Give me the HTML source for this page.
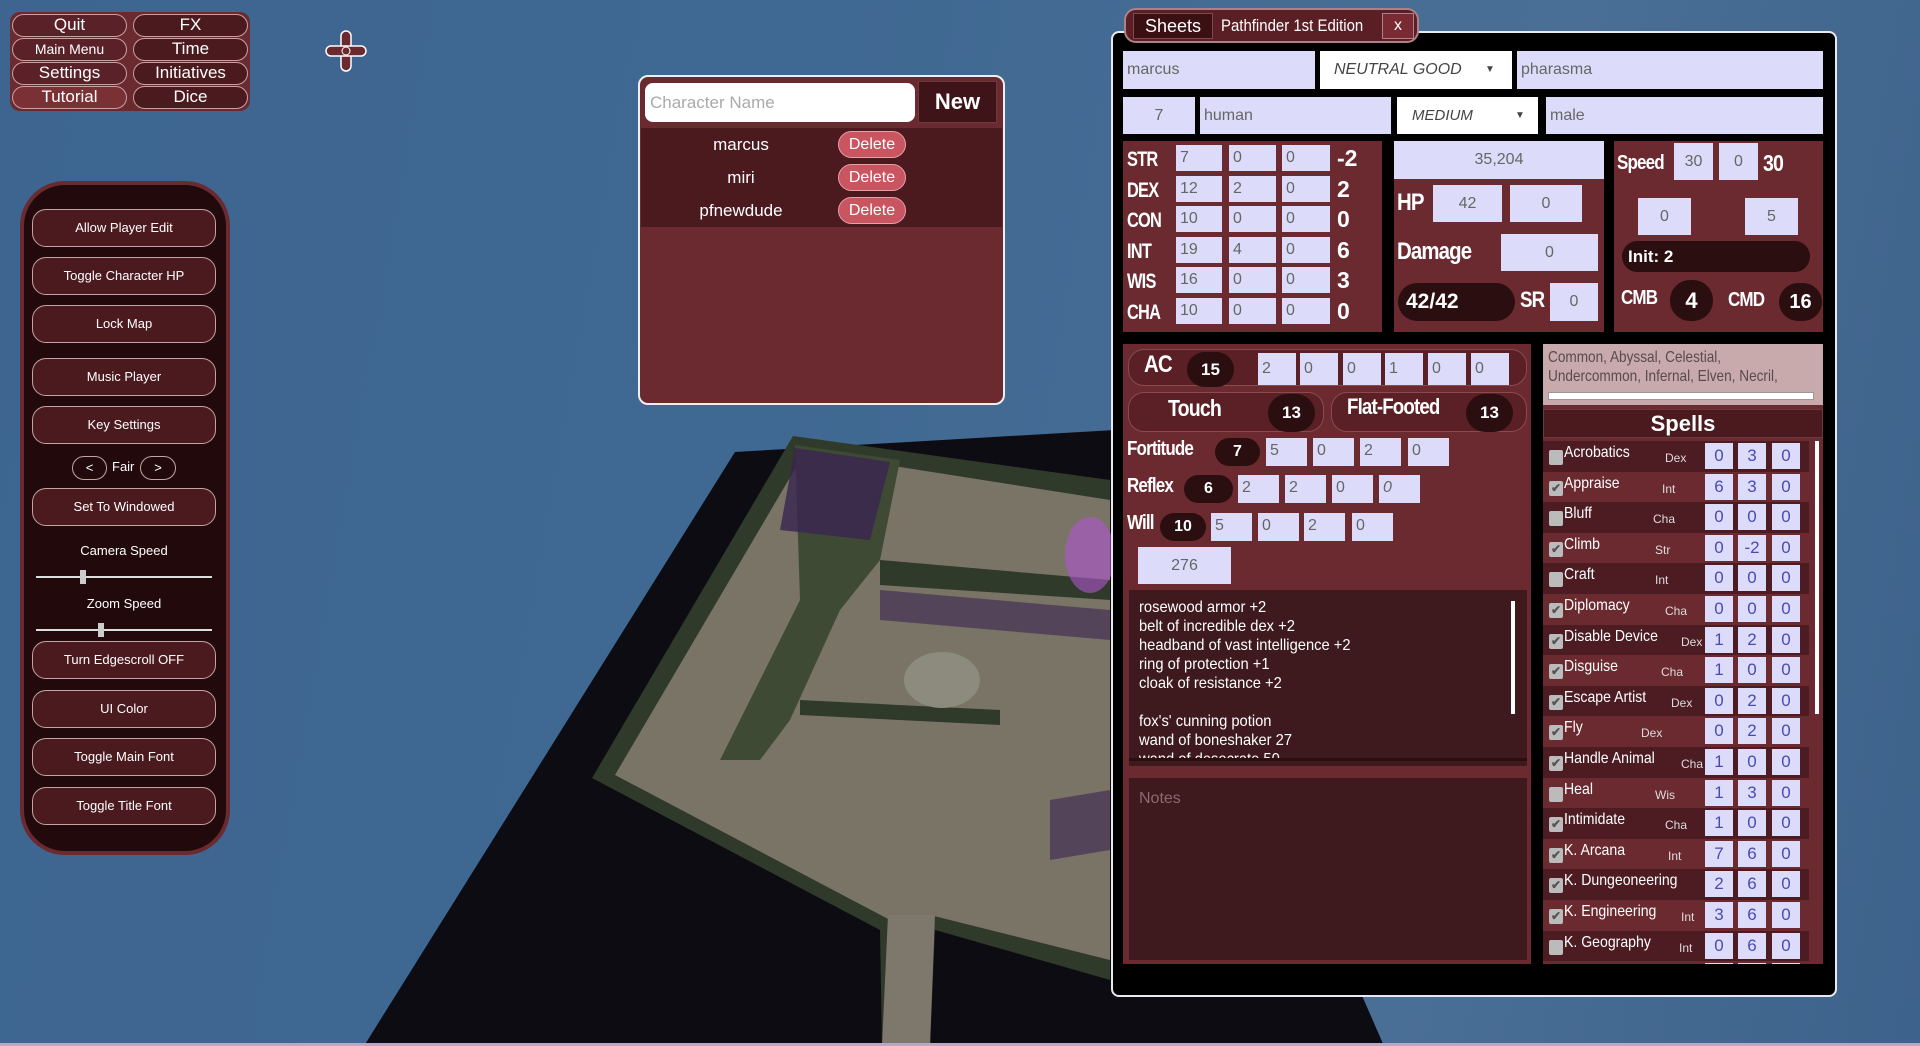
<!DOCTYPE html>
<html><head><meta charset="utf-8">
<style>
*{margin:0;padding:0;box-sizing:border-box}
body{width:1920px;height:1046px;overflow:hidden;position:relative;font-family:"Liberation Sans",sans-serif;background:linear-gradient(100deg,#3d6590 0%,#3f6892 40%,#4a6f96 75%,#3d628b 100%)}
.a{position:absolute}
.mb{position:absolute;height:23px;border:1.5px solid #c9a0a0;border-radius:12px;background:#5a2228;color:#fff;font:16px "Liberation Sans",sans-serif;text-align:center;line-height:20px}
.lb{position:absolute;left:32px;width:184px;height:38px;border:1.5px solid #c4a3a3;border-radius:14px;background:#4a1a1f;color:#fff;font:13px "Liberation Sans",sans-serif;text-align:center;line-height:35px}
.in{position:absolute;background:#dcdcfa;color:#666;font-size:16px;line-height:26px;padding-left:4px}
.lbl{position:absolute;color:#fff;font-weight:bold;font-size:21px;letter-spacing:-1px;transform:scaleX(.85);transform-origin:left}
.pill{position:absolute;background:#2a0e10;color:#fff;border-radius:20px;text-align:center;font-weight:bold}
.sk{height:30.6px;position:relative}
.sk:nth-child(odd){background:#4c1c22}
.sk:nth-child(even){background:#6a2a30}
.cb{position:absolute;left:6px;top:9px;width:14px;height:15px;background:#bbb;border-radius:2px;color:#555;font-size:12px;line-height:15px;text-align:center;font-weight:bold}
.sn{position:absolute;left:21px;top:3px;color:#fff;font-size:16px;transform:scaleX(.88);transform-origin:left;white-space:nowrap}
.sa{position:absolute;top:10px;color:#ddd;font-size:12px}
.sv{position:absolute;top:2px;width:28px;height:26px;background:#dcdcfa;color:#4a4ab0;font-size:17px;text-align:center;line-height:26px}
</style></head><body>

<!-- map -->
<svg class="a" style="left:0;top:0" width="1920" height="1046">
<polygon points="735,452 1115,430 1384,1046 364,1046" fill="#0c0c12"/>
<polygon points="793,436 1110,480 1110,980 935,930 930,1046 882,1046 880,930 592,778" fill="#2f3a2a"/>
<polygon points="805,452 1110,500 1110,960 930,915 890,920 615,775" fill="#7a7466"/>
<polygon points="795,445 900,460 880,560 840,610 790,720 760,760 720,760 800,600" fill="#3f4a34"/>
<polygon points="795,448 890,462 870,540 780,530" fill="#3a2450" opacity=".8"/>
<polygon points="880,560 1110,580 1110,600 880,585" fill="#2f3a2a"/>
<polygon points="800,700 1000,710 1000,725 800,715" fill="#2f3a2a"/>
<polygon points="880,590 1110,610 1110,640 880,620" fill="#3a2450" opacity=".6"/>
<polygon points="1050,800 1110,790 1110,850 1050,860" fill="#3a2450" opacity=".6"/>
<ellipse cx="942" cy="680" rx="38" ry="28" fill="#8d8a7e"/>
<ellipse cx="1090" cy="555" rx="25" ry="38" fill="#b055d0" opacity=".6"/>
<polygon points="888,915 935,915 930,1046 882,1046" fill="#7d786b"/>
</svg>

<!-- top menu -->
<div class="a" style="left:10px;top:12px;width:240px;height:99px;background:#6a2a30;border-radius:10px"></div>
<div class="mb" style="left:12px;top:14px;width:115px;font-size:17px">Quit</div>
<div class="mb" style="left:12px;top:38px;width:115px;font-size:14px">Main Menu</div>
<div class="mb" style="left:12px;top:62px;width:115px;font-size:17px">Settings</div>
<div class="mb" style="left:12px;top:86px;width:115px;background:#7a3035;font-size:17px">Tutorial</div>
<div class="mb" style="left:133px;top:14px;width:115px;background:#4a1a1f;font-size:17px">FX</div>
<div class="mb" style="left:133px;top:38px;width:115px;background:#4a1a1f;font-size:17px">Time</div>
<div class="mb" style="left:133px;top:62px;width:115px;background:#4a1a1f;font-size:17px">Initiatives</div>
<div class="mb" style="left:133px;top:86px;width:115px;background:#4a1a1f;font-size:17px">Dice</div>
<svg class="a" style="left:325px;top:30px" width="42" height="42"><g fill="#6a2a30" stroke="#fff" stroke-width="1.5"><rect x="16" y="1" width="10" height="40" rx="5"/><rect x="1" y="16" width="40" height="10" rx="5"/></g><circle cx="21" cy="21" r="4" fill="#6a2a30" stroke="#fff"/></svg>

<!-- left panel -->
<div class="a" style="left:20px;top:181px;width:210px;height:674px;background:#220a0c;border:4px solid #6a2a30;border-radius:45px"></div>
<div class="lb" style="top:209px">Allow Player Edit</div>
<div class="lb" style="top:257px">Toggle Character HP</div>
<div class="lb" style="top:305px">Lock Map</div>
<div class="lb" style="top:358px">Music Player</div>
<div class="lb" style="top:406px">Key Settings</div>
<div class="a" style="left:72px;top:456px;width:35px;height:24px;border:1.5px solid #c4a3a3;border-radius:12px;color:#fff;text-align:center;font:13px 'Liberation Sans';line-height:21px">&lt;</div>
<div class="a" style="left:112px;top:459px;color:#fff;font:13px 'Liberation Sans'">Fair</div>
<div class="a" style="left:140px;top:456px;width:36px;height:24px;border:1.5px solid #c4a3a3;border-radius:12px;color:#fff;text-align:center;font:13px 'Liberation Sans';line-height:21px">&gt;</div>
<div class="lb" style="top:488px">Set To Windowed</div>
<div class="a" style="left:32px;top:543px;width:184px;text-align:center;color:#fff;font:13px 'Liberation Sans'">Camera Speed</div>
<div class="a" style="left:36px;top:576px;width:176px;height:2px;background:#ddd"></div>
<div class="a" style="left:80px;top:570px;width:6px;height:14px;background:#ccc"></div>
<div class="a" style="left:32px;top:596px;width:184px;text-align:center;color:#fff;font:13px 'Liberation Sans'">Zoom Speed</div>
<div class="a" style="left:36px;top:629px;width:176px;height:2px;background:#ddd"></div>
<div class="a" style="left:98px;top:623px;width:6px;height:14px;background:#ccc"></div>
<div class="lb" style="top:641px">Turn Edgescroll OFF</div>
<div class="lb" style="top:690px">UI Color</div>
<div class="lb" style="top:738px">Toggle Main Font</div>
<div class="lb" style="top:787px">Toggle Title Font</div>

<!-- character panel -->
<div class="a" style="left:638px;top:75px;width:367px;height:330px;background:#6a2a30;border:2px solid #eee;border-radius:10px"></div>
<div class="a" style="left:645px;top:83px;width:270px;height:39px;background:#fff;border-radius:8px;color:#aaa;font:17px 'Liberation Sans';line-height:39px;padding-left:5px">Character Name</div>
<div class="a" style="left:918px;top:81px;width:79px;height:42px;background:#3e1418;border:1px solid #6a3a3e;color:#fff;font:bold 22px 'Liberation Sans';text-align:center;line-height:40px">New</div>
<div class="a" style="left:641px;top:128px;width:361px;height:99px;background:#4a1a1e"></div>
<div class="a" style="left:676px;top:128px;width:130px;text-align:center;color:#fff;font:17px 'Liberation Sans';line-height:33px">marcus<br>miri<br>pfnewdude</div>
<div class="a" style="left:838px;top:131px;width:68px;height:27px;background:#c95560;border:1px solid #e8a0a8;border-radius:14px;color:#fff;font:16px 'Liberation Sans';text-align:center;line-height:25px">Delete</div>
<div class="a" style="left:838px;top:164px;width:68px;height:27px;background:#c95560;border:1px solid #e8a0a8;border-radius:14px;color:#fff;font:16px 'Liberation Sans';text-align:center;line-height:25px">Delete</div>
<div class="a" style="left:838px;top:197px;width:68px;height:27px;background:#c95560;border:1px solid #e8a0a8;border-radius:14px;color:#fff;font:16px 'Liberation Sans';text-align:center;line-height:25px">Delete</div>

<!-- sheet -->
<div class="a" style="left:1111px;top:31px;width:726px;height:966px;background:#000;border:2px solid #e8e8ee;border-radius:8px"></div>
<div class="a" style="left:1124px;top:8px;width:295px;height:35px;background:#5a1f25;border:2px solid #b08088;border-radius:12px"></div>
<div class="a" style="left:1133px;top:13px;width:80px;height:26px;background:#3a1013;border:1px solid #7a4a4e;color:#fff;font-size:18px;text-align:center;line-height:24px">Sheets</div>
<div class="a" style="left:1221px;top:13px;color:#fff;font-size:17px;line-height:26px;transform:scaleX(.88);transform-origin:left;white-space:nowrap">Pathfinder 1st Edition</div>
<div class="a" style="left:1382px;top:13px;width:32px;height:26px;background:#7a2a32;border:1px solid #b08088;color:#fff;font-size:16px;text-align:center;line-height:24px">x</div>

<div class="in" style="left:1123px;top:51px;width:192px;height:38px;line-height:38px">marcus</div>
<div class="a" style="left:1320px;top:51px;width:192px;height:38px;background:#fff;color:#444;font-size:16px;line-height:38px;padding-left:14px;font-style:italic">NEUTRAL GOOD<span style="position:absolute;left:165px;font-size:10px;font-style:normal">▼</span></div>
<div class="in" style="left:1517px;top:51px;width:306px;height:38px;line-height:38px">pharasma</div>
<div class="in" style="left:1123px;top:97px;width:72px;height:37px;line-height:37px;text-align:center;padding:0">7</div>
<div class="in" style="left:1200px;top:97px;width:191px;height:37px;line-height:37px">human</div>
<div class="a" style="left:1397px;top:97px;width:141px;height:37px;background:#fff;color:#444;font-size:15px;line-height:37px;padding-left:15px;font-style:italic">MEDIUM<span style="position:absolute;left:118px;font-size:10px;font-style:normal">▼</span></div>
<div class="in" style="left:1546px;top:97px;width:277px;height:37px;line-height:37px">male</div>

<!-- stats -->
<div class="a" style="left:1123px;top:141px;width:259px;height:191px;background:#6a2a30"></div>
<div class="lbl" style="left:1127px;top:145px;line-height:30.6px;transform:scaleX(.78)">STR<br>DEX<br>CON<br>INT<br>WIS<br>CHA</div>
<div class="a" style="left:1176px;top:145px">
<div style="display:grid;grid-template-columns:53px 53px 53px 40px;grid-auto-rows:30.6px">
<div class="in" style="position:static;width:46px;height:26px">7</div><div class="in" style="position:static;width:47px;height:26px">0</div><div class="in" style="position:static;width:48px;height:26px">0</div><div style="color:#fff;font-size:23px;font-weight:bold;padding-left:2px">-2</div>
<div class="in" style="position:static;width:46px;height:26px">12</div><div class="in" style="position:static;width:47px;height:26px">2</div><div class="in" style="position:static;width:48px;height:26px">0</div><div style="color:#fff;font-size:23px;font-weight:bold;padding-left:2px">2</div>
<div class="in" style="position:static;width:46px;height:26px">10</div><div class="in" style="position:static;width:47px;height:26px">0</div><div class="in" style="position:static;width:48px;height:26px">0</div><div style="color:#fff;font-size:23px;font-weight:bold;padding-left:2px">0</div>
<div class="in" style="position:static;width:46px;height:26px">19</div><div class="in" style="position:static;width:47px;height:26px">4</div><div class="in" style="position:static;width:48px;height:26px">0</div><div style="color:#fff;font-size:23px;font-weight:bold;padding-left:2px">6</div>
<div class="in" style="position:static;width:46px;height:26px">16</div><div class="in" style="position:static;width:47px;height:26px">0</div><div class="in" style="position:static;width:48px;height:26px">0</div><div style="color:#fff;font-size:23px;font-weight:bold;padding-left:2px">3</div>
<div class="in" style="position:static;width:46px;height:26px">10</div><div class="in" style="position:static;width:47px;height:26px">0</div><div class="in" style="position:static;width:48px;height:26px">0</div><div style="color:#fff;font-size:23px;font-weight:bold;padding-left:2px">0</div>
</div></div>

<div class="a" style="left:1394px;top:141px;width:210px;height:191px;background:#6a2a30"></div>
<div class="in" style="left:1394px;top:141px;width:210px;height:38px;line-height:38px;text-align:center;padding:0">35,204</div>
<div class="lbl" style="left:1397px;top:189px;font-size:24px">HP</div>
<div class="in" style="left:1433px;top:185px;width:69px;height:37px;line-height:37px;text-align:center;padding:0">42</div>
<div class="in" style="left:1510px;top:185px;width:72px;height:37px;line-height:37px;text-align:center;padding:0">0</div>
<div class="lbl" style="left:1397px;top:238px;font-size:24px">Damage</div>
<div class="in" style="left:1501px;top:234px;width:97px;height:37px;line-height:37px;text-align:center;padding:0">0</div>
<div class="pill" style="left:1398px;top:283px;width:117px;height:38px;line-height:38px;font-size:21px;text-align:left;padding-left:8px">42/42</div>
<div class="lbl" style="left:1520px;top:287px;font-size:22px">SR</div>
<div class="in" style="left:1550px;top:283px;width:48px;height:38px;line-height:38px;text-align:center;padding:0">0</div>

<div class="a" style="left:1614px;top:141px;width:209px;height:191px;background:#6a2a30"></div>
<div class="lbl" style="left:1617px;top:152px;font-size:20px">Speed</div>
<div class="in" style="left:1674px;top:143px;width:39px;height:37px;line-height:37px;text-align:center;padding:0">30</div>
<div class="in" style="left:1719px;top:143px;width:39px;height:37px;line-height:37px;text-align:center;padding:0">0</div>
<div class="lbl" style="left:1763px;top:150px;font-size:23px">30</div>
<div class="in" style="left:1638px;top:198px;width:53px;height:37px;line-height:37px;text-align:center;padding:0">0</div>
<div class="in" style="left:1745px;top:198px;width:53px;height:37px;line-height:37px;text-align:center;padding:0">5</div>
<div class="pill" style="left:1622px;top:241px;width:188px;height:31px;line-height:31px;font-size:17px;text-align:left;padding-left:6px">Init: 2</div>
<div class="lbl" style="left:1621px;top:287px;font-size:20px">CMB</div>
<div class="pill" style="left:1670px;top:280px;width:43px;height:41px;line-height:41px;font-size:22px">4</div>
<div class="lbl" style="left:1728px;top:289px;font-size:20px">CMD</div>
<div class="pill" style="left:1779px;top:283px;width:43px;height:38px;line-height:38px;font-size:20px">16</div>

<!-- lower left -->
<div class="a" style="left:1123px;top:344px;width:408px;height:620px;background:#6a2a30"></div>
<div class="a" style="left:1128px;top:349px;width:399px;height:37px;border:1.5px solid #8a4a50;border-radius:16px;background:#5a2026"></div>
<div class="lbl" style="left:1144px;top:351px;font-size:24px">AC</div>
<div class="pill" style="left:1187px;top:352px;width:47px;height:35px;line-height:35px;font-size:17px">15</div>
<div class="in" style="left:1258px;top:353px;width:38px;height:32px;line-height:32px">2</div>
<div class="in" style="left:1300px;top:353px;width:38px;height:32px;line-height:32px">0</div>
<div class="in" style="left:1343px;top:353px;width:38px;height:32px;line-height:32px">0</div>
<div class="in" style="left:1385px;top:353px;width:38px;height:32px;line-height:32px">1</div>
<div class="in" style="left:1428px;top:353px;width:38px;height:32px;line-height:32px">0</div>
<div class="in" style="left:1471px;top:353px;width:38px;height:32px;line-height:32px">0</div>
<div class="a" style="left:1128px;top:392px;width:196px;height:40px;border:1.5px solid #8a4a50;border-radius:16px;background:#5a2026"></div>
<div class="lbl" style="left:1168px;top:395px;font-size:23px">Touch</div>
<div class="pill" style="left:1268px;top:394px;width:47px;height:38px;line-height:38px;font-size:17px">13</div>
<div class="a" style="left:1331px;top:392px;width:196px;height:40px;border:1.5px solid #8a4a50;border-radius:16px;background:#5a2026"></div>
<div class="lbl" style="left:1347px;top:394px;font-size:22px">Flat-Footed</div>
<div class="pill" style="left:1466px;top:394px;width:47px;height:38px;line-height:38px;font-size:17px">13</div>

<div class="lbl" style="left:1127px;top:438px;font-size:20px">Fortitude</div>
<div class="pill" style="left:1215px;top:438px;width:45px;height:28px;line-height:28px;font-size:16px">7</div>
<div class="in" style="left:1266px;top:438px;width:41px;height:28px">5</div>
<div class="in" style="left:1313px;top:438px;width:41px;height:28px">0</div>
<div class="in" style="left:1360px;top:438px;width:41px;height:28px">2</div>
<div class="in" style="left:1408px;top:438px;width:41px;height:28px">0</div>
<div class="lbl" style="left:1127px;top:475px;font-size:20px">Reflex</div>
<div class="pill" style="left:1184px;top:475px;width:49px;height:28px;line-height:28px;font-size:16px">6</div>
<div class="in" style="left:1238px;top:475px;width:41px;height:28px">2</div>
<div class="in" style="left:1285px;top:475px;width:41px;height:28px">2</div>
<div class="in" style="left:1332px;top:475px;width:41px;height:28px">0</div>
<div class="in" style="left:1379px;top:475px;width:41px;height:28px;font-style:italic">0</div>
<div class="lbl" style="left:1127px;top:512px;font-size:20px">Will</div>
<div class="pill" style="left:1160px;top:513px;width:46px;height:28px;line-height:28px;font-size:16px">10</div>
<div class="in" style="left:1211px;top:513px;width:41px;height:28px">5</div>
<div class="in" style="left:1258px;top:513px;width:41px;height:28px">0</div>
<div class="in" style="left:1304px;top:513px;width:41px;height:28px">2</div>
<div class="in" style="left:1352px;top:513px;width:41px;height:28px">0</div>
<div class="in" style="left:1138px;top:547px;width:93px;height:37px;line-height:37px;text-align:center;padding:0">276</div>

<div class="a" style="left:1129px;top:590px;width:398px;height:176px;background:#3e1a1e;overflow:hidden">
<div style="position:absolute;left:10px;top:8px;color:#fff;font-size:16px;line-height:19px;transform:scaleX(.92);transform-origin:left">rosewood armor +2<br>belt of incredible dex +2<br>headband of vast intelligence +2<br>ring of protection +1<br>cloak of resistance +2<br><br>fox's' cunning potion<br>wand of boneshaker 27<br>wand of desecrate 50</div>
<div style="position:absolute;left:382px;top:11px;width:4px;height:113px;background:#fff"></div>
<div style="position:absolute;left:0;top:168px;width:398px;height:10px;background:#3e1a1e;border-top:3px solid #2a0e10"></div>
</div>
<div class="a" style="left:1129px;top:778px;width:398px;height:182px;background:#3e1a1e;color:#8a6a6e;font-size:16px;padding:12px 10px">Notes</div>

<!-- right lower -->
<div class="a" style="left:1543px;top:344px;width:280px;height:620px;background:#6a2a30;overflow:hidden">
<div style="position:absolute;left:0;top:0;width:280px;height:61px;background:#c8aaac;"></div>
<div style="position:absolute;left:5px;top:4px;width:310px;height:40px;color:#5a4a4c;font-size:16px;line-height:19px;overflow:hidden;transform:scaleX(.85);transform-origin:left">Common, Abyssal, Celestial,<br>Undercommon, Infernal, Elven, Necril,<br>Orc, Goblin, Aklo, Dark Folk</div>
<div style="position:absolute;left:5px;top:48px;width:266px;height:8px;background:#fff;border:1px solid #999"></div>
<div style="position:absolute;left:0;top:65px;width:280px;height:29px;background:#4a1a1f;border:1px solid #6a3a3e;color:#fff;font-size:22px;font-weight:bold;text-align:center;line-height:27px">Spells</div>
<div style="position:absolute;left:0;top:97px;width:266px">
<div class="sk"><div class="cb"></div><div class="sn">Acrobatics</div><div class="sa" style="left:122px">Dex</div><div class="sv" style="left:162px">0</div><div class="sv" style="left:195px">3</div><div class="sv" style="left:229px">0</div></div>
<div class="sk"><div class="cb">✔</div><div class="sn">Appraise</div><div class="sa" style="left:119px">Int</div><div class="sv" style="left:162px">6</div><div class="sv" style="left:195px">3</div><div class="sv" style="left:229px">0</div></div>
<div class="sk"><div class="cb"></div><div class="sn">Bluff</div><div class="sa" style="left:110px">Cha</div><div class="sv" style="left:162px">0</div><div class="sv" style="left:195px">0</div><div class="sv" style="left:229px">0</div></div>
<div class="sk"><div class="cb">✔</div><div class="sn">Climb</div><div class="sa" style="left:112px">Str</div><div class="sv" style="left:162px">0</div><div class="sv" style="left:195px">-2</div><div class="sv" style="left:229px">0</div></div>
<div class="sk"><div class="cb"></div><div class="sn">Craft</div><div class="sa" style="left:112px">Int</div><div class="sv" style="left:162px">0</div><div class="sv" style="left:195px">0</div><div class="sv" style="left:229px">0</div></div>
<div class="sk"><div class="cb">✔</div><div class="sn">Diplomacy</div><div class="sa" style="left:122px">Cha</div><div class="sv" style="left:162px">0</div><div class="sv" style="left:195px">0</div><div class="sv" style="left:229px">0</div></div>
<div class="sk"><div class="cb">✔</div><div class="sn">Disable Device</div><div class="sa" style="left:138px">Dex</div><div class="sv" style="left:162px">1</div><div class="sv" style="left:195px">2</div><div class="sv" style="left:229px">0</div></div>
<div class="sk"><div class="cb">✔</div><div class="sn">Disguise</div><div class="sa" style="left:118px">Cha</div><div class="sv" style="left:162px">1</div><div class="sv" style="left:195px">0</div><div class="sv" style="left:229px">0</div></div>
<div class="sk"><div class="cb">✔</div><div class="sn">Escape Artist</div><div class="sa" style="left:128px">Dex</div><div class="sv" style="left:162px">0</div><div class="sv" style="left:195px">2</div><div class="sv" style="left:229px">0</div></div>
<div class="sk"><div class="cb">✔</div><div class="sn">Fly</div><div class="sa" style="left:98px">Dex</div><div class="sv" style="left:162px">0</div><div class="sv" style="left:195px">2</div><div class="sv" style="left:229px">0</div></div>
<div class="sk"><div class="cb">✔</div><div class="sn">Handle Animal</div><div class="sa" style="left:138px">Cha</div><div class="sv" style="left:162px">1</div><div class="sv" style="left:195px">0</div><div class="sv" style="left:229px">0</div></div>
<div class="sk"><div class="cb"></div><div class="sn">Heal</div><div class="sa" style="left:112px">Wis</div><div class="sv" style="left:162px">1</div><div class="sv" style="left:195px">3</div><div class="sv" style="left:229px">0</div></div>
<div class="sk"><div class="cb">✔</div><div class="sn">Intimidate</div><div class="sa" style="left:122px">Cha</div><div class="sv" style="left:162px">1</div><div class="sv" style="left:195px">0</div><div class="sv" style="left:229px">0</div></div>
<div class="sk"><div class="cb">✔</div><div class="sn">K. Arcana</div><div class="sa" style="left:125px">Int</div><div class="sv" style="left:162px">7</div><div class="sv" style="left:195px">6</div><div class="sv" style="left:229px">0</div></div>
<div class="sk"><div class="cb">✔</div><div class="sn">K. Dungeoneering</div><div class="sv" style="left:162px">2</div><div class="sv" style="left:195px">6</div><div class="sv" style="left:229px">0</div></div>
<div class="sk"><div class="cb">✔</div><div class="sn">K. Engineering</div><div class="sa" style="left:138px">Int</div><div class="sv" style="left:162px">3</div><div class="sv" style="left:195px">6</div><div class="sv" style="left:229px">0</div></div>
<div class="sk"><div class="cb"></div><div class="sn">K. Geography</div><div class="sa" style="left:136px">Int</div><div class="sv" style="left:162px">0</div><div class="sv" style="left:195px">6</div><div class="sv" style="left:229px">0</div></div>
<div class="sk"><div class="cb"></div><div class="sn">K. History</div><div class="sa" style="left:120px">Int</div><div class="sv" style="left:162px">0</div><div class="sv" style="left:195px">6</div><div class="sv" style="left:229px">0</div></div>
</div>
<div style="position:absolute;left:272px;top:97px;width:4px;height:273px;background:#fff"></div>
</div>
<div class="a" style="left:0;top:1043px;width:1920px;height:3px;background:#b8a8c8"></div>
</body></html>
